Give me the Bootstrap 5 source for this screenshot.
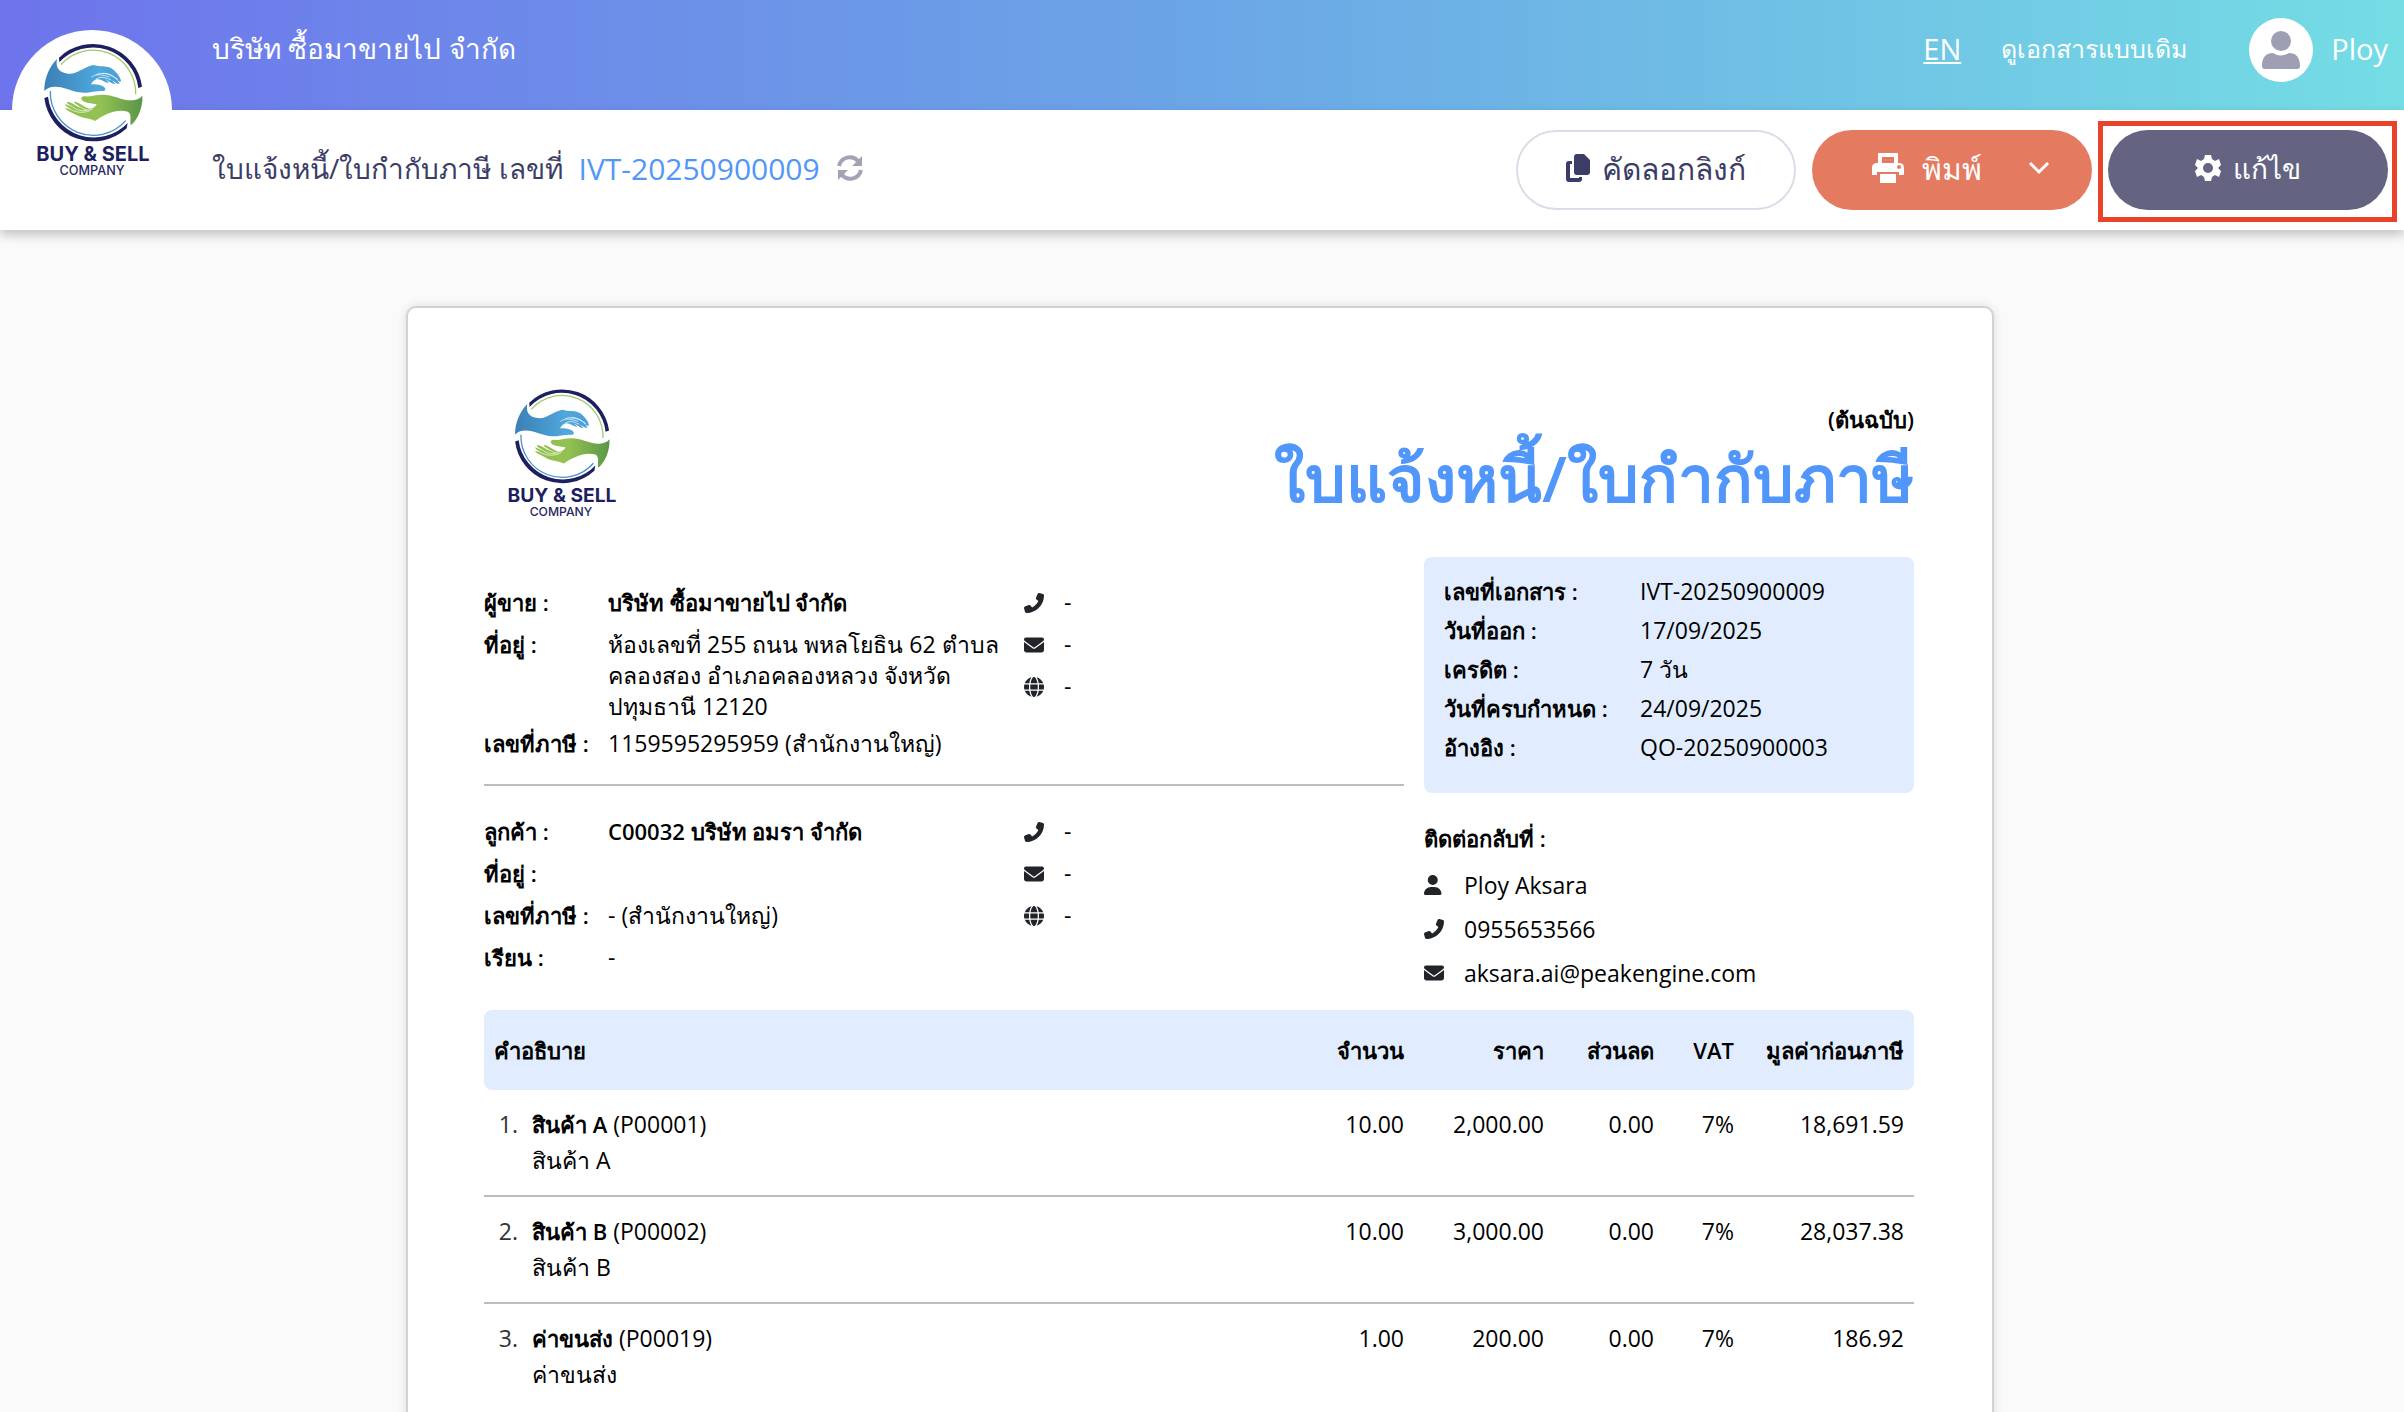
<!DOCTYPE html>
<html lang="th">
<head>
<meta charset="utf-8">
<meta name="viewport" content="width=device-width, initial-scale=1">
<title>ใบแจ้งหนี้/ใบกำกับภาษี IVT-20250900009</title>
<link href="https://cdn.jsdelivr.net/npm/bootstrap@5.3.0/dist/css/bootstrap.min.css" rel="stylesheet">
<style>
:root{--ink:#3c3d66;--sky:#5196fa;--pale:#e1edfe;--rule:#bdbdbd}
body{font-family:"Open Sans","Noto Sans",sans-serif;font-size:23px;font-weight:400;line-height:31px;color:#000;background:#fafafa}
svg{flex:none;fill:currentColor}
.topbar{height:110px;padding:0 16px 14px 212px;color:#fff;font-size:29px;background:linear-gradient(90deg,#6e74ec,#6ba6e6 50%,#74dde4)}
.topbar a{color:#fff}
.topbar .company{font-size:28px}
.topbar .old-link{font-size:25px;margin:0 62px 0 40px}
.topbar .account{gap:18px}
.avatar{width:64px;height:64px;margin-top:4px;color:#9f9fb3}
.brand{position:absolute;left:12px;top:30px;width:160px;height:160px}
.brand-name{font-family:Inter,"Open Sans",sans-serif;font-size:60px;font-weight:650;fill:#1d1f60}
.brand-sub{font-family:Inter,"Open Sans",sans-serif;font-size:38px;font-weight:500;fill:#25265f}
.subbar{height:120px;padding:0 16px 4px 212px;color:var(--ink);font-size:28px;box-shadow:0 5px 10px rgba(0,0,0,.22);z-index:1}
.subbar .docno{color:var(--sky);font-size:30px}
.pill{width:280px;height:80px;margin-top:4px;padding:6px 12px 10px;border-radius:40px;font-size:30px;font-weight:400;gap:12px}
.pill-copy,.pill-copy:hover{border:2px solid #dcdbe8;color:var(--ink)}
.pill-print,.pill-print:hover{background:#e47b61;color:#fff;gap:18px;padding-left:30px}
.pill-print svg:last-child{margin-left:28px}
.pill-edit,.pill-edit:hover{background:#646482;color:#fff;font-size:28px}
.hilite{position:absolute;inset:-5px -9px -12px -10px;border:5px solid #ea4228;pointer-events:none}
.sheet-area{padding-top:76px}
.paper{width:100%;max-width:1588px;border:2px solid #d2d2d2;border-radius:10px;padding:68px 78px 68px 76px;box-shadow:0 0 10px rgba(0,0,0,.12)}
.paper-head{height:181px}
.doc-title{color:var(--sky);font-size:64px;line-height:86px;font-weight:600}
.side{width:490px}
.infobox{background:var(--pale);border-radius:8px;padding:15px 20px 24px;height:236px}
.infobox dt,.infobox dd{line-height:39px}
.infobox dt{width:196px}
dt,.label-b,.items th{font-weight:600;font-size:22px}
dl,dd{margin:0}
.reach{padding-top:30px}
.reach .label-b{margin-bottom:9px}
.reach .line{line-height:44px}
.reach .line:last-child{margin-bottom:15px}
.party{padding-top:30px}
.party dt{width:124px;flex:none}
.party dd{width:410px}
.party .line{padding-bottom:11px}
.party .line.address{padding-bottom:6px}
.party-contact{width:380px}
.party-contact .line,.reach .line{gap:20px}
.ico{width:20px;height:20px;color:#212529}
.rule{border-top:2px solid var(--rule);margin-top:14px}
.items{border-collapse:separate;border-spacing:0}
.items th,.items td{padding:0 10px;text-align:right;vertical-align:top}
.items th{height:80px;background:var(--pale);vertical-align:middle}
.items th:first-child{border-radius:8px 0 0 8px;text-align:left}
.items th:last-child{border-radius:0 8px 8px 0}
.items td{padding-top:16px;height:107px;line-height:36px;border-bottom:2px solid var(--rule)}
.items tr:last-child td{height:120px}
.items .num{padding:16px 4px 0 0;color:#333}
</style>
<script src="https://cdn.jsdelivr.net/npm/bootstrap@5.3.0/dist/js/bootstrap.bundle.min.js"></script>
</head>
<body>
<svg width="0" height="0" class="position-absolute" aria-hidden="true">
<defs>
<linearGradient id="blueHand" x1="0" x2="1"><stop offset="0" stop-color="#3b7fb5"/><stop offset=".7" stop-color="#4fa8dc"/><stop offset="1" stop-color="#4a9dd6"/></linearGradient>
<linearGradient id="greenHand" x1="0" x2="1"><stop offset="0" stop-color="#8fbf4c"/><stop offset=".45" stop-color="#94c153"/><stop offset="1" stop-color="#5a9647"/></linearGradient>
<g id="hands">
<path fill="#1d1f60" d="M177 113A148 148 0 0 1 426 200L415 204A137 137 0 0 0 178 127Z"/>
<path fill="#1d1f60" d="M133 234A148 148 0 0 0 380 325L383 309A139 139 0 0 1 144 230Z"/>
<path fill="none" stroke="#a3ca69" stroke-width="4" d="M183 134A128 128 0 0 1 407 223"/>
<path fill="none" stroke="#4793c4" stroke-width="4" d="M151 213A129 129 0 0 0 377 302"/>
<path fill="url(#blueHand)" d="M171 117C166 142 176 158 204 161C232 164 242 145 279 135C299 141 323 136 337 147C350 157 362 172 363 184C359 187 356 183 352 181L359 191C351 194 343 185 336 181L346 192C336 193 326 183 317 178L327 188C315 190 304 175 289 178C280 181 275 189 273 193C289 193 305 194 314 203C318 208 316 213 310 213C276 213 264 221 238 217C208 211 186 199 164 200C145 201 138 208 133 213C132 178 148 139 171 117Z"/>
<path fill="none" stroke="#fff" stroke-width="2" d="M274 172C292 157 310 167 329 171M289 164C309 154 333 164 354 178M306 161C326 158 342 168 352 181M288 178C304 166 320 175 333 180"/>
<path fill="url(#greenHand)" d="M427 227C429 262 414 298 392 316C389 303 397 281 383 275C350 266 314 283 285 303C270 294 248 296 231 286C213 276 199 272 195 264L213 268C205 262 194 257 196 252L218 262C210 254 196 249 203 245C220 249 231 260 242 264C232 255 221 249 222 245C238 246 251 261 268 266C279 267 287 259 290 253C276 249 253 250 245 239C242 234 246 229 255 229C276 231 294 221 319 225C350 229 367 241 391 241C411 241 421 234 427 227Z"/>
<path fill="none" stroke="#fff" stroke-width="2" d="M213 257C225 268 241 275 260 271M206 265C224 277 248 281 270 272M227 252C244 265 260 274 278 268"/>
</g>
</defs>
<symbol id="phone" viewBox="0 0 512 512"><path d="M347 24.6c7.700-18.600 28-28.500 47.400-23.200l88 24C499.900 30.200 512 46 512 64c0 247.400-200.600 448-448 448-18 0-33.800-12.100-38.600-29.500l-24-88c-5.300-19.400 4.600-39.700 23.200-47.400l96-40c16.300-6.800 35.200-2.100 46.300 11.600L207.300 368c70.400-33.300 127.400-90.300 160.700-160.700l-49.300-40.400c-13.700-11.200-18.400-30-11.600-46.300z"/></symbol>
<symbol id="mail" viewBox="0 0 512 512"><path d="M48 64C21.500 64 0 85.500 0 112c0 15.100 7.100 29.300 19.200 38.400l217.600 163.200c11.400 8.500 27 8.500 38.400 0l217.600-163.200C504.900 141.300 512 127.100 512 112c0-26.500-21.500-48-48-48zM0 176v208c0 35.300 28.700 64 64 64h384c35.300 0 64-28.700 64-64V176L294.400 339.200a64 64 0 0 1-76.800 0z"/></symbol>
<symbol id="globe" viewBox="0 0 512 512"><path d="M352 256c0 22.200-1.200 43.600-3.300 64H163.300c-2.200-20.400-3.300-41.800-3.300-64s1.200-43.600 3.300-64h185.400c2.200 20.400 3.300 41.800 3.300 64zm28.800-64h123.100c5.300 20.500 8.100 41.900 8.100 64s-2.800 43.500-8.100 64H380.800c2.100-20.600 3.200-42 3.200-64s-1.100-43.400-3.200-64zm112.600-32H376.700c-10-63.900-29.800-117.400-55.300-151.600 78.300 20.700 142 77.500 172 151.600zM344.300 160H167.700c6.100-36.400 15.500-68.600 27-94.700 10.500-23.600 22.200-40.700 33.500-51.500C239.400 3.200 248.700 0 256 0s16.600 3.200 27.800 13.800c11.300 10.800 23 27.900 33.500 51.500 11.600 26 20.900 58.200 27 94.700zm-209 0H18.600C48.600 85.900 112.200 29.100 190.600 8.400 165.100 42.600 145.300 96.100 135.300 160zM8.100 192h123.100c-2.100 20.600-3.200 42-3.200 64s1.100 43.400 3.200 64H8.100C2.800 299.500 0 278.100 0 256s2.800-43.500 8.100-64zm186.600 254.600c-11.600-26-20.900-58.200-27-94.600h176.600c-6.100 36.400-15.500 68.600-27 94.600-10.500 23.600-22.200 40.700-33.500 51.500C272.600 508.800 263.300 512 256 512s-16.600-3.200-27.800-13.800c-11.300-10.800-23-27.900-33.500-51.600zM135.300 352c10 63.900 29.800 117.400 55.300 151.600C112.200 482.900 48.600 426.100 18.600 352zm358.100 0c-30 74.100-93.600 130.900-171.900 151.600 25.500-34.200 45.200-87.700 55.300-151.600z"/></symbol>
<symbol id="user" viewBox="0 0 512 512"><path d="M224 256a128 128 0 1 0 0-256 128 128 0 1 0 0 256zm-46 48C80 304 0 384 0 482c0 17 13 30 30 30h388c17 0 30-13 30-30 0-98-80-178-178-178z"/></symbol>
</svg>

<div class="vh-100 overflow-hidden d-flex flex-column">
<header class="position-relative flex-shrink-0">
  <div class="topbar d-flex align-items-center">
    <div class="company me-auto">บริษัท ซื้อมาขายไป จำกัด</div>
    <a href="#">EN</a>
    <a href="#" class="old-link text-decoration-none">ดูเอกสารแบบเดิม</a>
    <div class="account d-flex align-items-center">
      <span class="avatar rounded-circle bg-white d-flex align-items-center justify-content-center"><svg width="38" height="38" viewBox="0 0 38 38"><circle cx="19" cy="10" r="10"/><path d="M0 35C0 26 4 22 11 22Q19 27 27 22C34 22 38 26 38 35Q38 38 35 38H3Q0 38 0 35Z"/></svg></span>
      <span>Ploy</span>
    </div>
  </div>
  <div class="subbar bg-white position-relative d-flex align-items-center">
    <div class="d-flex align-items-center gap-3 me-auto">
      <span>ใบแจ้งหนี้/ใบกำกับภาษี เลขที่</span><span class="docno">IVT-20250900009</span>
      <svg width="28" height="28" viewBox="0 0 28 28"><path d="M3 12A11 11 0 0 1 22 7M25 16A11 11 0 0 1 6 21" fill="none" stroke="#a3a3b5" stroke-width="4"/><path d="M26 2V12H16ZM2 26V16H12Z" fill="#a3a3b5"/></svg>
    </div>
    <div class="d-flex gap-3">
      <button class="btn pill pill-copy d-flex align-items-center justify-content-center"><svg width="24" height="28" viewBox="0 0 24 28"><path d="M11 0H18L24 6V18Q24 21 21 21H11Q8 21 8 18V3Q8 0 11 0ZM3 7H6V10H4V24H13V23H16V25Q16 28 13 28H3Q0 28 0 25V10Q0 7 3 7Z"/></svg>คัดลอกลิงก์</button>
      <button class="btn pill pill-print d-flex align-items-center justify-content-center"><svg width="32" height="30" viewBox="0 0 32 30"><path d="M6 0H26V12H22V4H10V12H6ZM5 10H27Q32 10 32 15V22H27V19H5V22H0V15Q0 10 5 10ZM8 21H24V30H8Z"/><circle cx="27" cy="14" r="2" fill="#e47b61"/></svg><span>พิมพ์</span><svg width="22" height="14" viewBox="0 0 22 14"><path d="M2 2L11 11L20 2" fill="none" stroke="#fff" stroke-width="3"/></svg></button>
      <div class="position-relative"><button class="btn pill pill-edit d-flex align-items-center justify-content-center"><svg width="26" height="26" viewBox="0 0 26 26"><path fill-rule="evenodd" d="M10 0H16L17 4L20 6L24 4L26 10L23 13L26 16L24 22L20 20L17 22L16 26H10L9 22L6 20L2 22L0 16L3 13L0 10L2 4L6 6L9 4ZM13 8A5 5 0 1 0 13 18A5 5 0 1 0 13 8Z"/></svg>แก้ไข</button><span class="hilite"></span></div>
    </div>
  </div>
  <svg class="brand z-1" viewBox="36 30 480 480"><circle cx="276" cy="270" r="240" fill="#fff"/><use href="#hands"/><text class="brand-name" x="279" y="424" text-anchor="middle">BUY &amp; SELL</text><text class="brand-sub" x="276" y="465" text-anchor="middle">COMPANY</text></svg>
</header>

<main class="sheet-area pe-1 flex-fill">
<article class="paper bg-white mx-auto">
  <div class="paper-head d-flex justify-content-between">
    <svg width="154" height="154" viewBox="36 30 480 480"><use href="#hands"/><text class="brand-name" x="279" y="424" text-anchor="middle">BUY &amp; SELL</text><text class="brand-sub" x="276" y="465" text-anchor="middle">COMPANY</text></svg>
    <div class="text-end pt-4 mt-1"><div class="label-b">(ต้นฉบับ)</div><h1 class="doc-title mb-0">ใบแจ้งหนี้/ใบกำกับภาษี</h1></div>
  </div>
  <div class="d-flex">
    <div class="flex-fill me-1 pe-3">
      <section class="party d-flex justify-content-between">
        <dl>
          <div class="line d-flex"><dt>ผู้ขาย :</dt><dd class="label-b">บริษัท ซื้อมาขายไป จำกัด</dd></div>
          <div class="line address d-flex"><dt>ที่อยู่ :</dt><dd>ห้องเลขที่ 255 ถนน พหลโยธิน 62 ตำบล<br>คลองสอง อำเภอคลองหลวง จังหวัด<br>ปทุมธานี 12120</dd></div>
          <div class="line d-flex"><dt>เลขที่ภาษี :</dt><dd>1159595295959 (สำนักงานใหญ่)</dd></div>
        </dl>
        <div class="party-contact">
          <div class="line d-flex align-items-center"><svg class="ico"><use href="#phone"/></svg>-</div>
          <div class="line d-flex align-items-center"><svg class="ico"><use href="#mail"/></svg>-</div>
          <div class="line d-flex align-items-center"><svg class="ico"><use href="#globe"/></svg>-</div>
        </div>
      </section>
      <div class="rule"></div>
      <section class="party d-flex justify-content-between">
        <dl>
          <div class="line d-flex"><dt>ลูกค้า :</dt><dd class="label-b">C00032 บริษัท อมรา จำกัด</dd></div>
          <div class="line d-flex"><dt>ที่อยู่ :</dt><dd></dd></div>
          <div class="line d-flex"><dt>เลขที่ภาษี :</dt><dd>- (สำนักงานใหญ่)</dd></div>
          <div class="line d-flex"><dt>เรียน :</dt><dd>-</dd></div>
        </dl>
        <div class="party-contact">
          <div class="line d-flex align-items-center"><svg class="ico"><use href="#phone"/></svg>-</div>
          <div class="line d-flex align-items-center"><svg class="ico"><use href="#mail"/></svg>-</div>
          <div class="line d-flex align-items-center"><svg class="ico"><use href="#globe"/></svg>-</div>
        </div>
      </section>
    </div>
    <aside class="side flex-shrink-0">
      <dl class="infobox">
        <div class="d-flex"><dt>เลขที่เอกสาร :</dt><dd>IVT-20250900009</dd></div>
        <div class="d-flex"><dt>วันที่ออก :</dt><dd>17/09/2025</dd></div>
        <div class="d-flex"><dt>เครดิต :</dt><dd>7 วัน</dd></div>
        <div class="d-flex"><dt>วันที่ครบกำหนด :</dt><dd>24/09/2025</dd></div>
        <div class="d-flex"><dt>อ้างอิง :</dt><dd>QO-20250900003</dd></div>
      </dl>
      <div class="reach">
        <div class="label-b">ติดต่อกลับที่ :</div>
        <div class="line d-flex align-items-center"><svg class="ico"><use href="#user"/></svg>Ploy Aksara</div>
        <div class="line d-flex align-items-center"><svg class="ico"><use href="#phone"/></svg>0955653566</div>
        <div class="line d-flex align-items-center"><svg class="ico"><use href="#mail"/></svg>aksara.ai@peakengine.com</div>
      </div>
    </aside>
  </div>
  <table class="items w-100">
    <colgroup><col style="width:38px"><col><col style="width:140px"><col style="width:140px"><col style="width:110px"><col style="width:80px"><col style="width:170px"></colgroup>
    <thead><tr><th colspan="2">คำอธิบาย</th><th>จำนวน</th><th>ราคา</th><th>ส่วนลด</th><th>VAT</th><th class="text-nowrap ps-0">มูลค่าก่อนภาษี</th></tr></thead>
    <tbody>
      <tr><td class="num">1.</td><td class="text-start"><span class="label-b">สินค้า A</span> (P00001)<br>สินค้า A</td><td>10.00</td><td>2,000.00</td><td>0.00</td><td>7%</td><td>18,691.59</td></tr>
      <tr><td class="num">2.</td><td class="text-start"><span class="label-b">สินค้า B</span> (P00002)<br>สินค้า B</td><td>10.00</td><td>3,000.00</td><td>0.00</td><td>7%</td><td>28,037.38</td></tr>
      <tr><td class="num">3.</td><td class="text-start"><span class="label-b">ค่าขนส่ง</span> (P00019)<br>ค่าขนส่ง</td><td>1.00</td><td>200.00</td><td>0.00</td><td>7%</td><td>186.92</td></tr>
    </tbody>
  </table>
</article>
</main>
</div>
</body>
</html>
